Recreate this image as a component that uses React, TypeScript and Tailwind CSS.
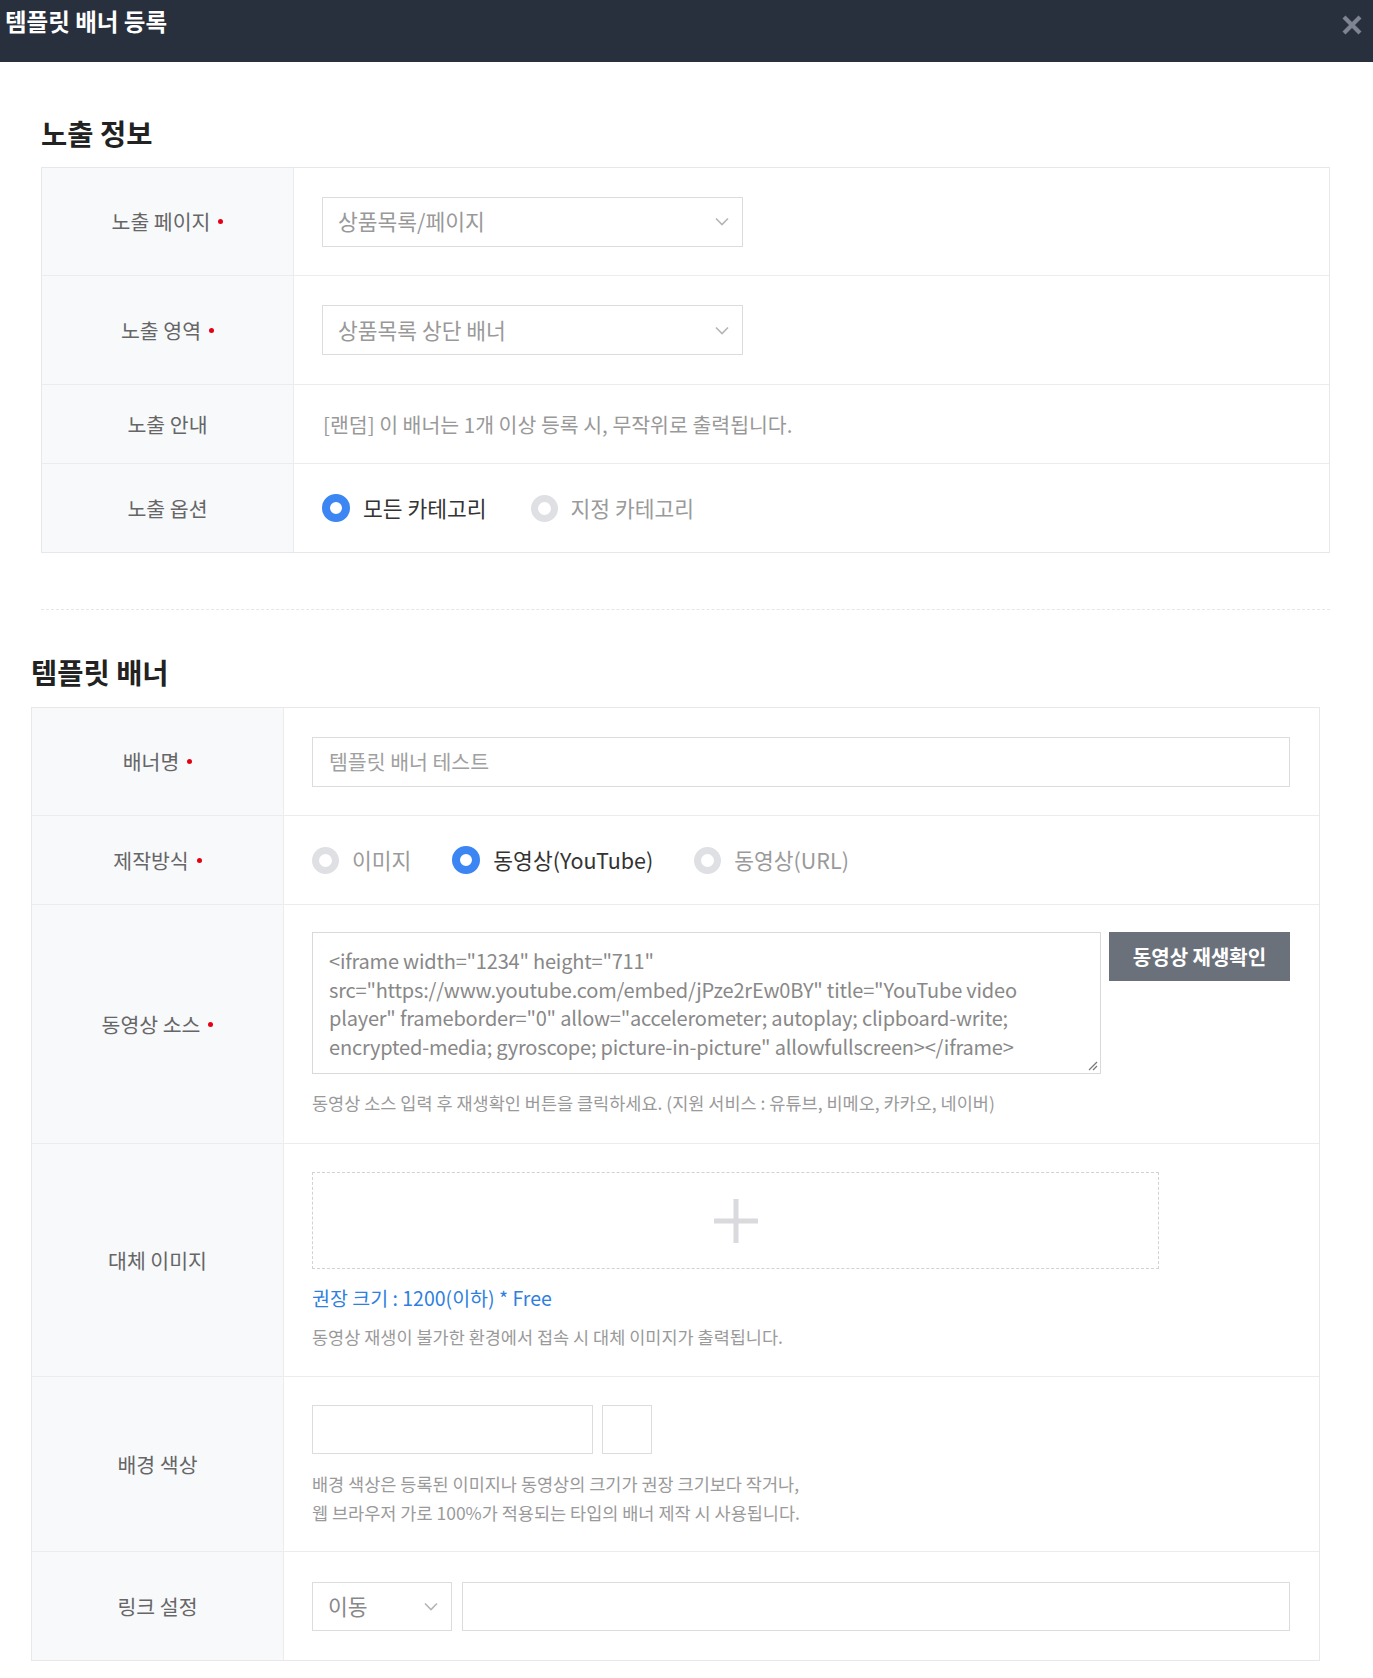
import React from "react";

const Dot = () => <span className="ml-[8px] inline-block w-[5px] h-[5px] rounded-full bg-[#e60012]" />;

function Label({ text, req }: { text: string; req?: boolean }) {
  return (
    <div className="w-[252px] shrink-0 bg-[#f8f9fb] border-r border-[#ececef] flex items-center justify-center text-[20.5px] text-[#666]">
      <span>{text}</span>
      {req && <Dot />}
    </div>
  );
}

function Radio({ on, text, dim }: { on?: boolean; text: string; dim?: boolean }) {
  return (
    <div className="flex items-center gap-[13px]">
      {on ? (
        <span className="w-[28px] h-[28px] rounded-full border-[8px] border-[#3b86f2] bg-white" />
      ) : (
        <span className="w-[27px] h-[27px] rounded-full border-[7px] border-[#dfe0e3] bg-white" />
      )}
      <span className={`text-[21.5px] ${dim ? "text-[#9a9a9a]" : "text-[#333]"}`}>{text}</span>
    </div>
  );
}

const Chevron = () => (
  <svg width="14" height="9" viewBox="0 0 14 9" fill="none">
    <path d="M1 1.5L7 7.5L13 1.5" stroke="#b5b5b5" strokeWidth="1.6" />
  </svg>
);

function Select({ text, w }: { text: string; w: string }) {
  return (
    <div className={`${w} h-[50px] border border-[#dcdcdc] bg-white flex items-center justify-between pl-[15px] pr-[13px]`}>
      <span className="text-[21.5px] text-[#999]">{text}</span>
      <Chevron />
    </div>
  );
}

export default function App() {
  return (
    <div className="w-[1373px] min-h-[1678px] bg-white font-['Noto_Sans_CJK_KR','Noto_Sans',sans-serif]">
      {/* header */}
      <div className="h-[62px] bg-[#29303d] flex justify-between items-start">
        <div className="pt-[6px] pl-[5px] text-[23.5px] leading-[30px] font-bold text-white">템플릿 배너 등록</div>
        <div className="pt-[14px] pr-[10px]">
          <svg width="22" height="22" viewBox="0 0 22 22">
            <path d="M3 3L19 19M19 3L3 19" stroke="#7e8591" strokeWidth="4.2" strokeLinecap="butt" />
          </svg>
        </div>
      </div>

      {/* section 1 */}
      <div className="pl-[41px] w-[1330px]">
        <div className="mt-[52px] text-[28.5px] leading-[37px] font-bold text-[#222]">노출 정보</div>
        <div className="mt-[16px] border border-[#e8e8eb]">
          <div className="flex h-[108px] border-b border-[#ececef]">
            <Label text="노출 페이지" req />
            <div className="flex-1 flex items-center pl-[28px]">
              <Select text="상품목록/페이지" w="w-[421px]" />
            </div>
          </div>
          <div className="flex h-[109px] border-b border-[#ececef]">
            <Label text="노출 영역" req />
            <div className="flex-1 flex items-center pl-[28px]">
              <Select text="상품목록 상단 배너" w="w-[421px]" />
            </div>
          </div>
          <div className="flex h-[79px] border-b border-[#ececef]">
            <Label text="노출 안내" />
            <div className="flex-1 flex items-center pl-[29px] text-[20.5px] text-[#999]">
              [랜덤] 이 배너는 1개 이상 등록 시, 무작위로 출력됩니다.
            </div>
          </div>
          <div className="flex h-[88px]">
            <Label text="노출 옵션" />
            <div className="flex-1 flex items-center pl-[28px] gap-[44px]">
              <Radio on text="모든 카테고리" />
              <Radio dim text="지정 카테고리" />
            </div>
          </div>
        </div>
        <div className="mt-[56px] border-t border-dashed border-[#e6e6e9]" />
      </div>

      {/* section 2 */}
      <div className="pl-[31px] w-[1320px] pb-[18px]">
        <div className="mt-[43px] text-[28.5px] leading-[37px] font-bold text-[#222]">템플릿 배너</div>
        <div className="mt-[17px] border border-[#e8e8eb]">
          <div className="flex h-[108px] border-b border-[#ececef]">
            <Label text="배너명" req />
            <div className="flex-1 flex items-center pl-[28px] pr-[29px]">
              <div className="w-full h-[50px] border border-[#dcdcdc] flex items-center pl-[16px] text-[20.5px] text-[#a0a0a0]">
                템플릿 배너 테스트
              </div>
            </div>
          </div>
          <div className="flex h-[89px] border-b border-[#ececef]">
            <Label text="제작방식" req />
            <div className="flex-1 flex items-center pl-[28px] gap-[41px]">
              <Radio dim text="이미지" />
              <Radio on text="동영상(YouTube)" />
              <Radio dim text="동영상(URL)" />
            </div>
          </div>
          <div className="flex h-[239px] border-b border-[#ececef]">
            <Label text="동영상 소스" req />
            <div className="flex-1 pl-[28px] pt-[27px]">
              <div className="flex gap-[8px]">
                <div className="relative w-[789px] h-[142px] border border-[#d9d9d9] pl-[16px] pt-[14px] text-[20px] leading-[28.5px] text-[#888] whitespace-pre overflow-hidden tracking-[-0.2px]">
                  <div>{'<iframe width="1234" height="711"'}</div>
                  <div>{'src="https://www.youtube.com/embed/jPze2rEw0BY" title="YouTube video'}</div>
                  <div>{'player" frameborder="0" allow="accelerometer; autoplay; clipboard-write;'}</div>
                  <div>{'encrypted-media; gyroscope; picture-in-picture" allowfullscreen></iframe>'}</div>
                  <svg className="absolute right-[2px] bottom-[2px]" width="12" height="12" viewBox="0 0 12 12">
                    <path d="M11 3L3 11M11 7L7 11" stroke="#777" strokeWidth="1.2" />
                  </svg>
                </div>
                <div className="w-[181px] h-[49px] bg-[#6b717b] flex items-center justify-center text-[20px] font-bold text-white">
                  동영상 재생확인
                </div>
              </div>
              <div className="mt-[18px] text-[17.5px] leading-[22px] text-[#9a9a9a]">
                동영상 소스 입력 후 재생확인 버튼을 클릭하세요. (지원 서비스 : 유튜브, 비메오, 카카오, 네이버)
              </div>
            </div>
          </div>
          <div className="flex h-[233px] border-b border-[#ececef]">
            <Label text="대체 이미지" />
            <div className="flex-1 pl-[28px] pt-[28px]">
              <div className="w-[847px] h-[97px] border border-dashed border-[#d2d2d2] flex items-center justify-center">
                <svg width="44" height="44" viewBox="0 0 44 44">
                  <path d="M22 0V44M0 22H44" stroke="#d9dade" strokeWidth="5" />
                </svg>
              </div>
              <div className="mt-[17px] text-[19.5px] leading-[24px] text-[#2f7fe0]">권장 크기 : 1200(이하) * Free</div>
              <div className="mt-[16px] text-[17.5px] leading-[22px] text-[#9a9a9a]">
                동영상 재생이 불가한 환경에서 접속 시 대체 이미지가 출력됩니다.
              </div>
            </div>
          </div>
          <div className="flex h-[175px] border-b border-[#ececef]">
            <Label text="배경 색상" />
            <div className="flex-1 pl-[28px] pt-[28px]">
              <div className="flex gap-[9px]">
                <div className="w-[281px] h-[49px] border border-[#dcdcdc]" />
                <div className="w-[50px] h-[49px] border border-[#dcdcdc]" />
              </div>
              <div className="mt-[15px] text-[17.5px] leading-[29px] text-[#9a9a9a]">
                <div>배경 색상은 등록된 이미지나 동영상의 크기가 권장 크기보다 작거나,</div>
                <div>웹 브라우저 가로 100%가 적용되는 타입의 배너 제작 시 사용됩니다.</div>
              </div>
            </div>
          </div>
          <div className="flex h-[108px]">
            <Label text="링크 설정" />
            <div className="flex-1 flex items-center pl-[28px] pr-[29px] gap-[10px]">
              <div className="w-[140px] h-[49px] border border-[#dcdcdc] flex items-center justify-between pl-[15px] pr-[13px]">
                <span className="text-[21.5px] text-[#888]">이동</span>
                <Chevron />
              </div>
              <div className="flex-1 h-[49px] border border-[#dcdcdc]" />
            </div>
          </div>
        </div>
      </div>
    </div>
  );
}
